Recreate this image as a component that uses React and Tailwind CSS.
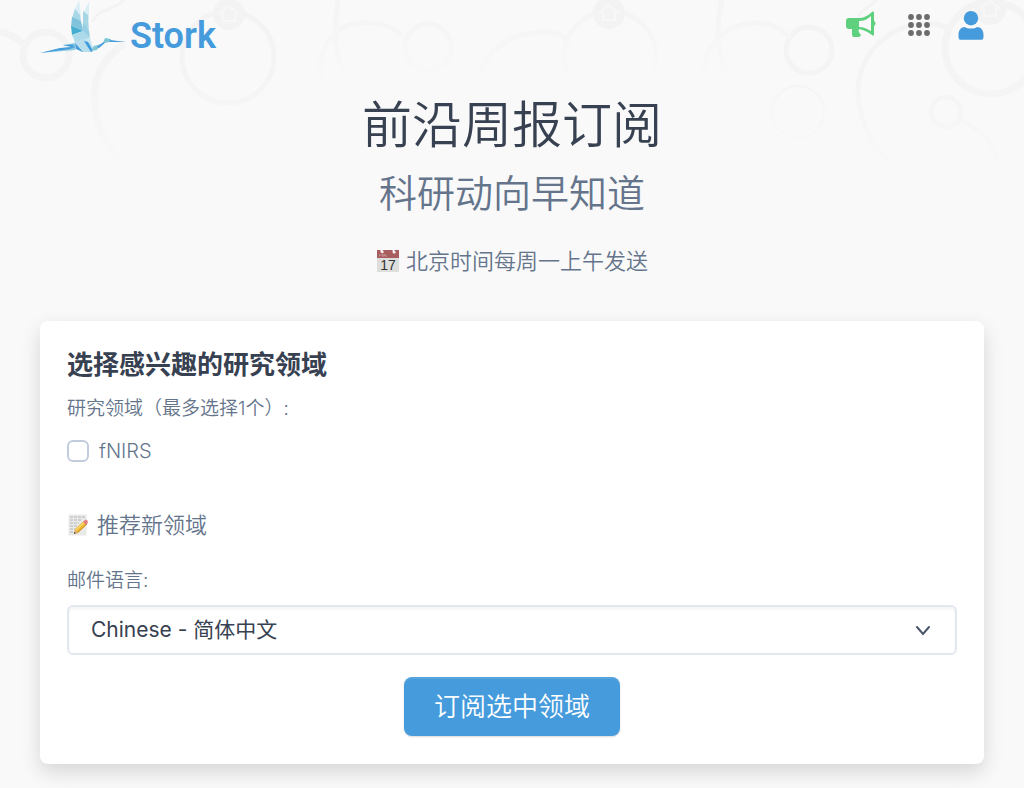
import { useState } from 'react'

const languages = [
    { value: 'zh', label: 'Chinese - 简体中文' },
    { value: 'en', label: 'English' }
]

const fields = ['fNIRS']

function Backdrop() {
    return (
        <svg className="pointer-events-none absolute left-0 top-0 w-full" height="240" viewBox="0 0 1024 240" preserveAspectRatio="xMidYMin slice" fill="none" aria-hidden="true">
            <defs>
                <linearGradient id="fade" x1="0" y1="0" x2="0" y2="240" gradientUnits="userSpaceOnUse">
                    <stop offset="0" stopColor="#f3f3f3" />
                    <stop offset="0.3" stopColor="#f4f4f4" />
                    <stop offset="0.75" stopColor="#f9f9f9" />
                </linearGradient>
                <linearGradient id="fade-fast" x1="0" y1="0" x2="0" y2="100" gradientUnits="userSpaceOnUse">
                    <stop offset="0" stopColor="#f4f4f4" />
                    <stop offset="0.9" stopColor="#f9f9f9" />
                </linearGradient>
            </defs>
            <g stroke="url(#fade)" strokeWidth="7">
                <circle cx="46" cy="55" r="23" />
                <path d="M-5 32C8 32 16 36 23 44" />
                <path d="M124 44C100 60 92 80 95 108C99 140 118 165 145 175" />
                <circle cx="798" cy="112" r="26" strokeWidth="2" />
                <circle cx="228" cy="57" r="46" strokeWidth="5" />
                <circle cx="809" cy="50" r="23" strokeWidth="5" />
                <path d="M948 27C900 12 858 50 858 90C858 130 885 172 925 180" strokeWidth="5" />
                <circle cx="991" cy="48" r="46" />
                <circle cx="946" cy="112" r="15" strokeWidth="5" />
                <path d="M960 120C985 130 1000 150 999 180" strokeWidth="5" />
                <path d="M60 215C75 185 120 175 140 188" strokeWidth="3" />
                <path d="M92 22C98 8 112 12 124 0" strokeWidth="3" />
                <path d="M858 16C864 8 872 6 878 -2" strokeWidth="3" />
            </g>
            <g stroke="url(#fade-fast)" strokeWidth="5">
                <path d="M324 90C314 60 326 24 362 23C384 22 394 28 402 36" />
                <path d="M338 0C330 50 340 78 362 90" />
                <circle cx="428" cy="47" r="23" />
                <path d="M477 90C478 65 496 32 545 32C556 32 564 36 569 42" />
                <circle cx="610" cy="57" r="46" />
                <path d="M706 90C696 60 716 24 754 23C774 23 784 30 790 38" />
                <path d="M722 0C712 45 722 76 745 92" />
            </g>
            <g fill="#f3f3f3">
                <circle cx="229" cy="14" r="16" />
                <circle cx="609" cy="13" r="16" />
                <circle cx="990" cy="9" r="16" />
            </g>
            <g stroke="#f7f7f7" strokeWidth="2">
                <path d="M219 14L229 6L239 14M223 13V21H235V13" />
                <path d="M599 13L609 5L619 13M603 12V20H615V12" />
                <path d="M980 9L990 1L1000 9M984 8V16H996V8" />
            </g>
        </svg>
    )
}

function StorkBird() {
    return (
        <svg width="86" height="54" viewBox="0 0 86 54" aria-hidden="true">
            <path d="M39 0L35 9L34 18L41 20L40 8Z" fill="#d9eef7" />
            <path d="M49 2L44 11L46 26L49 18Z" fill="#d9eef5" />
            <path d="M35 9L40 15L41 22L32 18Z" fill="#a8d7e8" />
            <path d="M43 11L48 15L49 33L43 22Z" fill="#a6d5e6" />
            <path d="M32 17L41 21L43 31L31 27Z" fill="#7fc4dc" />
            <path d="M31 26L43 31L32 35Z" fill="#45aed0" />
            <path d="M43 22L49 31L50 38L42 31Z" fill="#96cee4" />
            <path d="M43 31L32 35L35 42L46 41L50 38Z" fill="#addaea" />
            <path d="M0 53L22 48L37 46L35 50Z" fill="#8bcae1" />
            <path d="M0 53L20 48L34 47L30 49Z" fill="#459bdc" />
            <path d="M23 45L36 43L37 48Z" fill="#6bbbdc" />
            <path d="M23 45L32 45L36 48Z" fill="#459bdc" />
            <path d="M34 42L46 38L55 49L51 52L42 52L35 48Z" fill="#b7deea" />
            <path d="M35 43L43 52L36 49Z" fill="#459bdc" />
            <path d="M44 41L48 42L53 51L51 52Z" fill="#3e98de" />
            <path d="M50 37L53 49L49 42L45 40Z" fill="#cbe7ed" />
            <path d="M51 51L54 46L61 44L57 50Z" fill="#83c6d6" />
            <path d="M57 47L66 40L66 42L59 48Z" fill="#459bdc" />
            <path d="M63 43L65 38L71 39L70 42Z" fill="#7bc5d2" />
            <path d="M70 40L86 42L70 42Z" fill="#459bdc" />
        </svg>
    )
}

function MegaphoneIcon() {
    return (
        <svg width="34" height="28" viewBox="0 0 34 28" fill="#5fd07e" aria-hidden="true">
            <path fillRule="evenodd" d="M3 7H12C18 7 21 5 26 1C27 0 28 1 28 2V10C30 11 30 14 28 15V23C28 25 27 25 26 24C22 21 18 19 13 18C12 20 13 22 15 24C14 26 13 26 11 26H8C6 26 6 24 6 22V18H3C1 18 0 17 0 15V10C0 8 1 7 3 7ZM13 10V16C18 16 21 18 25 20V5C22 8 18 10 13 10Z" />
        </svg>
    )
}

function GridIcon() {
    const dots = [3, 11, 19]
    return (
        <svg width="22" height="22" viewBox="0 0 22 22" fill="#6c6c6e" aria-hidden="true">
            {dots.map((y) => dots.map((x) => <circle key={`${x}-${y}`} cx={x} cy={y} r="2.9" />))}
        </svg>
    )
}

function UserIcon() {
    return (
        <svg width="26" height="29" viewBox="0 0 26 29" fill="#459bdc" aria-hidden="true">
            <circle cx="13" cy="7.2" r="7.2" />
            <path d="M7 16C9 18 17 18 19 16C23 16 25.500 19 25.500 24V26C25.500 28 24.500 28.800 23 28.800H3C1.500 28.800 0.500 28 0.500 26V24C0.500 19 3 16 7 16Z" />
        </svg>
    )
}

function CalendarIcon() {
    return (
        <svg width="24" height="24" viewBox="0 0 24 24" aria-hidden="true">
            <rect x="1" y="1" width="22" height="22" fill="#dededd" />
            <rect x="1" y="1" width="22" height="8" fill="#a85d5e" />
            <path d="M4 5V7H3M6 5V7H8V5M9 5V7H11" stroke="#cfa1a1" strokeWidth="0.8" fill="none" />
            <path d="M5 1L7 4M17 1L19 4" stroke="#fff" strokeWidth="1.6" />
            <circle cx="6" cy="2.500" r="1.500" fill="#f7eeee" />
            <circle cx="18" cy="3" r="1.500" fill="#f7eeee" />
            <text x="12" y="21" textAnchor="middle" fontSize="14" fontFamily="Liberation Sans, sans-serif" fontWeight="400" fill="#333">17</text>
        </svg>
    )
}

function MemoIcon() {
    return (
        <svg width="22" height="24" viewBox="0 0 22 24" aria-hidden="true">
            <rect x="1.500" y="1.500" width="18" height="21" fill="#e9e9e9" />
            <path d="M3 4H18M3 7H15M3 10H12M3 13H10M3 16H8M3 19H7" stroke="#b4b6b6" strokeWidth="1" strokeDasharray="3 1" />
            <path d="M7 21L8 16L17 8L20 11L11 20Z" fill="#eeb72f" />
            <path d="M9 17L18 9" stroke="#f8d771" strokeWidth="1.500" />
            <path d="M10 20L20 11" stroke="#c98d22" strokeWidth="1" />
            <path d="M7 21L8 16L11 20Z" fill="#d9b583" />
            <path d="M7 21L7 19L9 20Z" fill="#444" />
            <path d="M16 9L18 7C20 6 22 9 20 11L19 12Z" fill="#e17d80" />
        </svg>
    )
}

export default function App() {
    const [selected, setSelected] = useState([])
    const [language, setLanguage] = useState('zh')

    const toggleField = (field) => {
        setSelected(selected.includes(field) ? [] : [field])
    }

    return (
        <div className="relative min-h-screen bg-[#f9f9f9] font-['Inter','Noto_Sans_CJK_SC',sans-serif] font-[350] text-[#64748b]">
            <Backdrop />

            <div className="relative px-10 pb-6">
                <header className="flex h-14 items-start justify-between">
                    <a href="#" className="flex items-start gap-1">
                        <StorkBird />
                        <span className="pt-4 font-['Roboto',sans-serif] text-[36px] font-semibold leading-10 text-[#459bdc]">Stork</span>
                    </a>
                    <nav className="flex h-[50px] items-center gap-7">
                        <button type="button" aria-label="公告"><MegaphoneIcon /></button>
                        <button type="button" aria-label="应用"><GridIcon /></button>
                        <button type="button" aria-label="账户"><UserIcon /></button>
                    </nav>
                </header>

                {/* Page title */}
                <div className="pt-[37px] text-center">
                    <h1 className="text-[50px] leading-16 text-[#374151]">前沿周报订阅</h1>
                    <h2 className="pt-2 text-[38px] leading-14">科研动向早知道</h2>
                    <p className="flex items-center justify-center gap-1.5 pt-5 text-[22px] leading-10">
                        <CalendarIcon />
                        北京时间每周一上午发送
                    </p>
                </div>

                {/* Subscription form */}
                <form className="mt-10 rounded-lg bg-white px-[27px] pb-7 pt-6 shadow-[0_8px_20px_rgba(0,0,0,0.14)]" onSubmit={(e) => e.preventDefault()}>
                    <h3 className="text-[26px] font-bold leading-10 text-[#374151]">选择感兴趣的研究领域</h3>
                    <fieldset>
                        <legend className="pt-2 text-[19px] leading-8">研究领域（最多选择1个）:</legend>
                        {fields.map((field) => (
                            <label key={field} className="flex items-center gap-2.5 pt-2.5 text-[20px] leading-8">
                                <input
                                    type="checkbox"
                                    checked={selected.includes(field)}
                                    onChange={() => toggleField(field)}
                                    className="size-[22px] appearance-none rounded-md border-2 border-[#c3ccdd] bg-white checked:bg-[#459bdc]"
                                />
                                {field}
                            </label>
                        ))}
                    </fieldset>
                    <a href="#" className="mt-[42px] flex items-center gap-2 text-[22px] leading-8">
                        <MemoIcon />
                        推荐新领域
                    </a>
                    <label htmlFor="language" className="block pt-6 text-[19px] leading-8">邮件语言:</label>
                    <div className="relative pt-2">
                        <select
                            id="language"
                            value={language}
                            onChange={(e) => setLanguage(e.target.value)}
                            className="h-[50px] w-full appearance-none rounded-md border-2 border-[#e2e8f0] bg-white px-[22px] text-[21px] font-normal text-[#374151] shadow-[inset_0_2px_3px_rgba(0,0,0,0.05)]"
                        >
                            {languages.map((lang) => (
                                <option key={lang.value} value={lang.value}>{lang.label}</option>
                            ))}
                        </select>
                        <svg className="pointer-events-none absolute right-6 top-6" width="20" height="20" viewBox="0 0 20 20" fill="none" stroke="#4a5568" strokeWidth="2" strokeLinecap="round" aria-hidden="true">
                            <path d="M4 6L10 13L16 6" />
                        </svg>
                    </div>
                    <div className="flex justify-center pt-[22px]">
                        <button type="submit" className="h-[59px] rounded-lg bg-[#459bdc] px-[30px] text-[26px] text-white shadow-[inset_0_2px_0_rgba(255,255,255,0.1),0_1px_2px_rgba(0,0,0,0.15)]">
                            订阅选中领域
                        </button>
                    </div>
                </form>
            </div>
        </div>
    )
}
